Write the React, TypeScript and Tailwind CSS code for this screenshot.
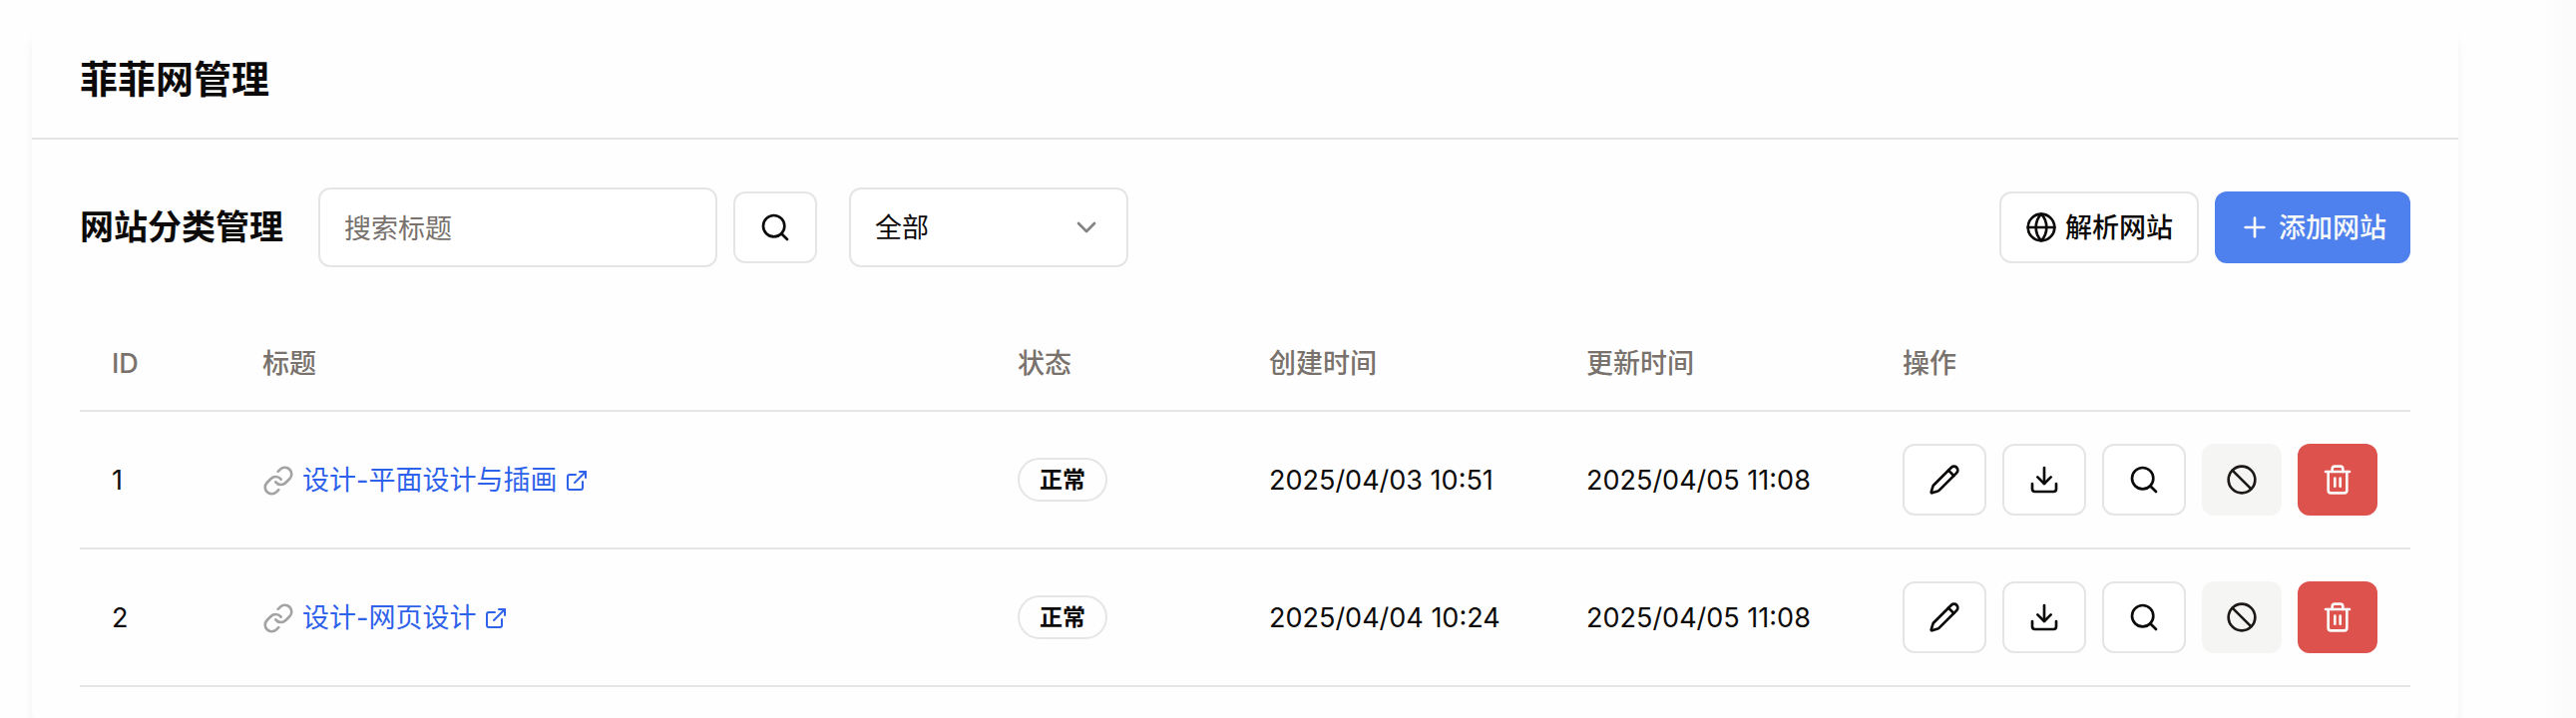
import React from "react";
import { Ban, ChevronDown, Download, ExternalLink, Globe, Link, Pencil, Plus, Search, Trash2 } from "lucide-react";

interface Site {
  id: number;
  title: string;
  status: string;
  created: string;
  updated: string;
}

const sites: Site[] = [
  { id: 1, title: "设计-平面设计与插画", status: "正常", created: "2025/04/03 10:51", updated: "2025/04/05 11:08" },
  { id: 2, title: "设计-网页设计", status: "正常", created: "2025/04/04 10:24", updated: "2025/04/05 11:08" },
];

const outline = "flex h-[72px] shrink-0 items-center justify-center rounded-xl border-2 border-[#e5e5e5] bg-white text-[#0c0a09]";
const solid = "flex h-[72px] shrink-0 items-center justify-center rounded-xl";
const headCell = "h-[97px] border-b-2 border-[#e5e5e5] px-8 pt-0.5 text-left font-medium text-[#78716c]";
const bodyCell = "h-[138px] border-b-2 border-[#e5e5e5] pl-8 whitespace-nowrap";
const textCell = bodyCell + " pt-0.5";

function RowActions() {
  return (
    <div className="flex gap-4">
      <button type="button" aria-label="编辑" className={outline + " w-[84px]"}>
        <Pencil className="size-8" />
      </button>
      <button type="button" aria-label="下载" className={outline + " w-[84px]"}>
        <Download className="size-8" />
      </button>
      <button type="button" aria-label="查看" className={outline + " w-[84px]"}>
        <Search className="size-8" />
      </button>
      <button type="button" aria-label="禁用" className={solid + " w-20 bg-[#f5f5f4] text-[#1c1917]"}>
        <Ban className="size-8" />
      </button>
      <button type="button" aria-label="删除" className={solid + " w-20 bg-[#dd524c] text-[#fafaf9]"}>
        <Trash2 className="size-8" />
      </button>
    </div>
  );
}

export default function App() {
  return (
    <div className="min-h-screen bg-[linear-gradient(to_right,#fefefe_calc(100%-36px),#fbfbfb)] pt-4 pr-[118px] pl-8 font-['Inter','Noto_Sans_CJK_SC',sans-serif] text-[27px] leading-10 text-[#0c0a09]">
      <main className="min-h-screen rounded-3xl bg-[#fefefe] shadow-[0_12px_12px_-2px_rgba(0,0,0,0.08)]">
        <header className="border-b-2 border-[#e5e5e5] px-12 pt-[38px] pb-[34px]">
          <h1 className="text-[38px] leading-[50px] font-bold">菲菲网管理</h1>
        </header>

        <section className="p-12">
          <div className="flex items-center">
            <h2 className="mr-[35px] shrink-0 text-[34px] leading-[50px] font-semibold">网站分类管理</h2>
            <input
              type="text"
              aria-label="搜索标题"
              placeholder="搜索标题"
              className="h-20 w-[400px] rounded-xl border-2 border-[#e5e5e5] bg-white px-6 pt-0.5 placeholder:text-[#78716c]"
            />
            <button type="button" aria-label="搜索" className={outline + " ml-4 w-[84px]"}>
              <Search className="size-8" />
            </button>
            <div className="relative ml-8 w-[280px]">
              <select
                aria-label="状态筛选"
                className="h-20 w-full appearance-none rounded-xl border-2 border-[#e5e5e5] bg-white px-6 pt-0.5"
              >
                <option>全部</option>
              </select>
              <ChevronDown className="pointer-events-none absolute top-6 right-[26px] size-8 opacity-50" />
            </div>
            <div className="ml-auto flex gap-4">
              <button type="button" className={outline + " gap-2 px-6 font-medium"}>
                <Globe className="size-8" />
                <span className="pt-0.5">解析网站</span>
              </button>
              <button type="button" className={solid + " gap-2 bg-[#4e81ee] px-6 font-medium text-[#fafaf9]"}>
                <Plus className="size-8" />
                <span className="pt-0.5">添加网站</span>
              </button>
            </div>
          </div>

          <table className="mt-12 w-full table-fixed border-separate border-spacing-0">
            <colgroup>
              <col className="w-[151px]" />
              <col />
              <col className="w-[252px]" />
              <col className="w-[318px]" />
              <col className="w-[317px]" />
              <col className="w-[541px]" />
            </colgroup>
            <thead>
              <tr>
                <th className={headCell}>ID</th>
                <th className={headCell}>标题</th>
                <th className={headCell}>状态</th>
                <th className={headCell}>创建时间</th>
                <th className={headCell}>更新时间</th>
                <th className={headCell}>操作</th>
              </tr>
            </thead>
            <tbody>
              {sites.map((site) => (
                <tr key={site.id}>
                  <td className={textCell}>{site.id}</td>
                  <td className={textCell}>
                    <div className="flex items-center gap-2">
                      <Link className="size-8 text-[#a3a3a3]" />
                      <a href="#" className="flex items-center gap-2 text-[#2f62ea]">
                        {site.title}
                        <ExternalLink className="size-6" />
                      </a>
                    </div>
                  </td>
                  <td className={bodyCell}>
                    <span className="flex h-11 w-[90px] items-center justify-center rounded-full border-2 border-[#e5e5e5] text-[23px] font-semibold">
                      {site.status}
                    </span>
                  </td>
                  <td className={textCell}>{site.created}</td>
                  <td className={textCell}>{site.updated}</td>
                  <td className={bodyCell}>
                    <RowActions />
                  </td>
                </tr>
              ))}
            </tbody>
          </table>
        </section>
      </main>
    </div>
  );
}
